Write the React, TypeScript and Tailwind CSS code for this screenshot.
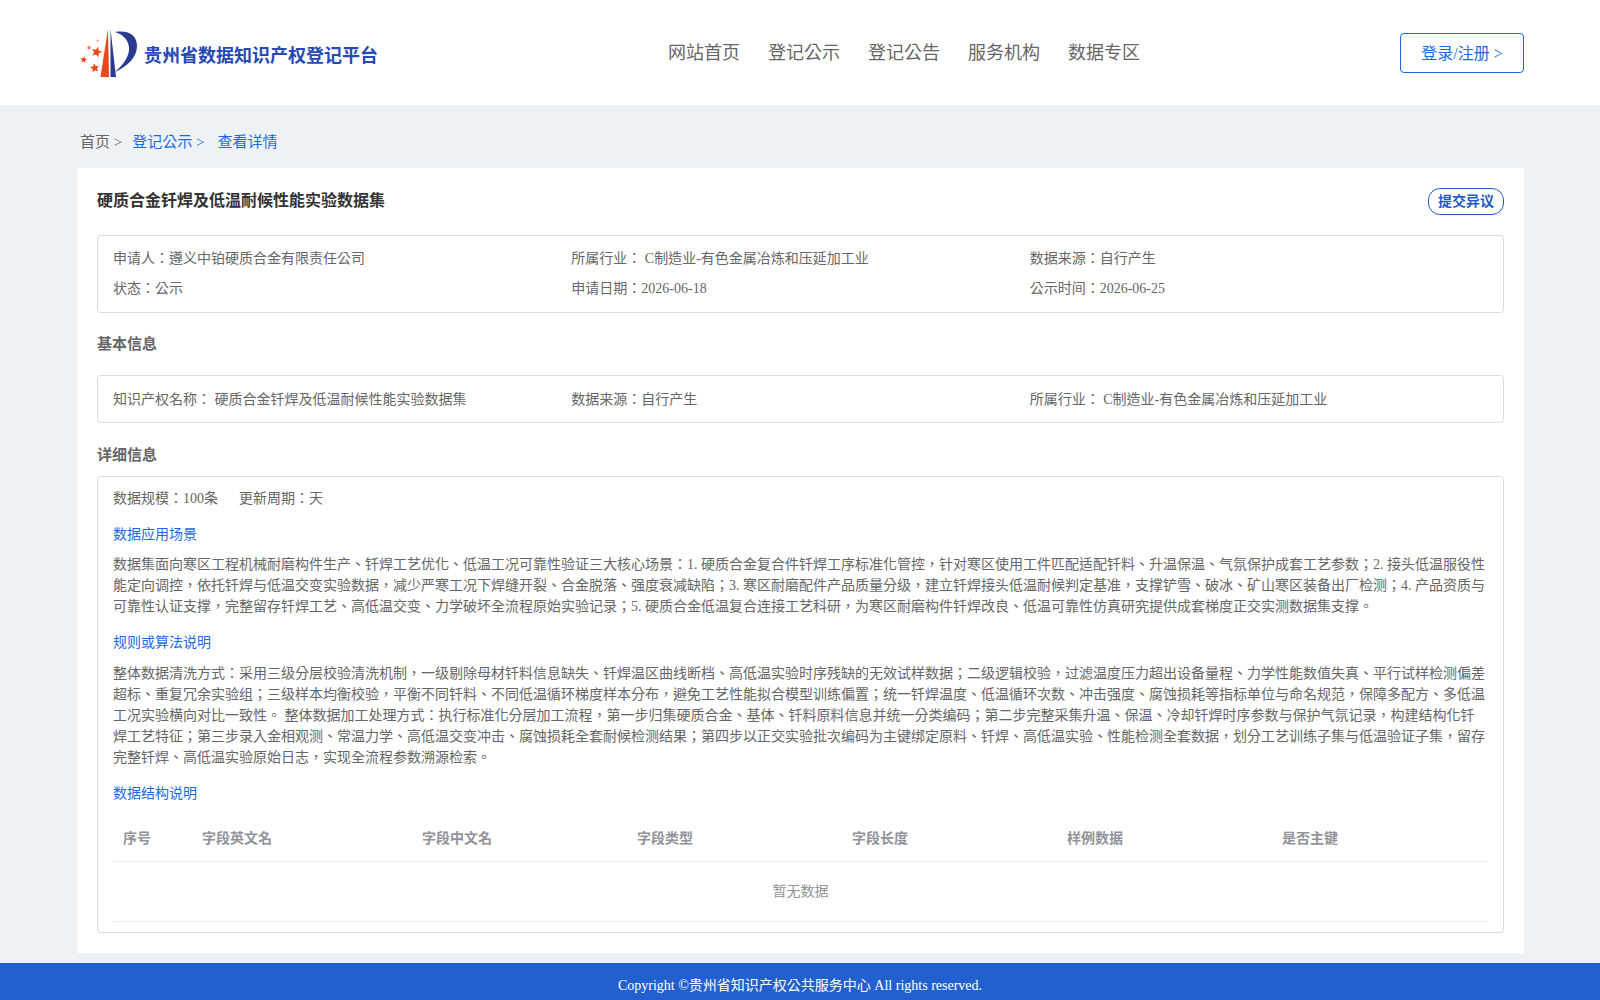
const info = [
  ["申请人：遵义中铂硬质合金有限责任公司", "所属行业： C制造业-有色金属冶炼和压延加工业", "数据来源：自行产生"],
  ["状态：公示", "申请日期：2026-06-18", "公示时间：2026-06-25"],
];
const basic = ["知识产权名称： 硬质合金钎焊及低温耐候性能实验数据集", "数据来源：自行产生", "所属行业： C制造业-有色金属冶炼和压延加工业"];
const nav = ["网站首页", "登记公示", "登记公告", "服务机构", "数据专区"];
const columns = [
  { name: "序号", width: "w-[79px]" },
  { name: "字段英文名", width: "w-[220px]" },
  { name: "字段中文名", width: "w-[215px]" },
  { name: "字段类型", width: "w-[215px]" },
  { name: "字段长度", width: "w-[215px]" },
  { name: "样例数据", width: "w-[215px]" },
  { name: "是否主键", width: "w-[216px]" },
];

function star(cx: number, cy: number, r: number, rot: number) {
  const pts: string[] = [];
  for (let i = 0; i < 10; i++) {
    const rad = i % 2 === 0 ? r : r * 0.45;
    const a = ((rot + i * 36 - 90) * Math.PI) / 180;
    pts.push(`${(cx + rad * Math.cos(a)).toFixed(2)},${(cy + rad * Math.sin(a)).toFixed(2)}`);
  }
  return pts.join(" ");
}

function Logo() {
  return (
    <svg width="58" height="52" viewBox="4 3 58 52" className="shrink-0">
      <path d="M32 5 L33 53 L24.500 53 Q28 30 32 5Z" fill="#e8481c" />
      <path d="M34.500 5 L40 53 L34.500 53Z" fill="#2a3a8f" />
      <path d="M39 8 C51 6 61 10 61 22 C61 34 50 43 39 48 C47 41 54 32 53 23 C52 15 46 10 39 8Z" fill="#2a3a8f" />
      <polygon points={star(20.700, 28, 5.5, 15)} fill="#e8481c" />
      <polygon points={star(18.700, 44, 4.8, -10)} fill="#e8481c" />
      <polygon points={star(7.700, 35.700, 3.5, 10)} fill="#e8481c" />
      <circle cx="13" cy="23.700" r="1.700" fill="#ee7a55" />
      <circle cx="21.700" cy="16.700" r="1.100" fill="#f09a80" />
    </svg>
  );
}

export default function App() {
  return (
    <div className="min-h-[1000px] flex flex-col bg-[#eff2f5] text-[14px] text-[#666] font-['Liberation_Serif','Noto_Sans_CJK_TC',serif]">
      <header className="h-[105px] bg-white px-[80px] flex items-center justify-between">
        <div className="flex items-center gap-[6px]">
          <Logo />
          <span className="mt-[8px] text-[18px] font-bold text-[#2649b5]">贵州省数据知识产权登记平台</span>
        </div>
        <nav className="flex gap-[28px] mt-[2px] ml-[30px] text-[18px]">
          {nav.map((n) => (
            <span key={n}>{n}</span>
          ))}
        </nav>
        <button className="w-[124px] h-[40px] mr-[-4px] pt-[2px] border border-[#1a6ae8] rounded-[4px] text-[16px] text-[#1a6ae8]">登录/注册 &gt;</button>
      </header>

      <div className="h-[63px] pl-[80px] pt-[12px] flex items-center text-[15px]">
        <span>首页 &gt;</span>
        <span className="ml-[10px] text-[#1a6ae8]">登记公示 &gt;</span>
        <span className="ml-[13px] text-[#1a6ae8]">查看详情</span>
      </div>

      <main className="ml-[77px] w-[1447px] h-[785px] bg-white px-[20px] pt-[20px]">
        <div className="h-[27px] flex items-center justify-between">
          <h1 className="pb-[2px] text-[16px] font-bold text-[#333]">硬质合金钎焊及低温耐候性能实验数据集</h1>
          <button className="h-[27px] w-[76px] border border-[#1f5bc4] rounded-[12px] text-[14px] font-bold text-[#1f5bc4]">提交异议</button>
        </div>

        <div className="mt-[20px] border border-[#dcdcdc] rounded-[4px] px-[15px] pt-[7px] pb-[9px]">
          {info.map((row, i) => (
            <div key={i} className="grid grid-cols-3 h-[30px] items-center">
              {row.map((c) => (
                <span key={c}>{c}</span>
              ))}
            </div>
          ))}
        </div>

        <h2 className="mt-[19px] h-[24px] leading-[24px] text-[15px] font-bold">基本信息</h2>
        <div className="mt-[19px] border border-[#dcdcdc] rounded-[4px] px-[15px] py-[8px]">
          <div className="grid grid-cols-3 h-[30px] items-center">
            {basic.map((c) => (
              <span key={c}>{c}</span>
            ))}
          </div>
        </div>

        <h2 className="mt-[20px] h-[24px] leading-[24px] text-[15px] font-bold">详细信息</h2>
        <div className="mt-[9px] h-[457px] border border-[#dcdcdc] rounded-[4px] px-[15px] pt-[8px]">
          <div className="h-[26px] flex items-center gap-[21px]">
            <span>数据规模：100条</span>
            <span>更新周期：天</span>
          </div>
          <h3 className="mt-[13px] h-[21px] leading-[21px] text-[#1a6ae8]">数据应用场景</h3>
          <p className="mt-[9px] leading-[21px]">
            数据集面向寒区工程机械耐磨构件生产、钎焊工艺优化、低温工况可靠性验证三大核心场景：1. 硬质合金复合件钎焊工序标准化管控，针对寒区使用工件匹配适配钎料、升温保温、气氛保护成套工艺参数；2. 接头低温服役性能定向调控，依托钎焊与低温交变实验数据，减少严寒工况下焊缝开裂、合金脱落、强度衰减缺陷；3. 寒区耐磨配件产品质量分级，建立钎焊接头低温耐候判定基准，支撑铲雪、破冰、矿山寒区装备出厂检测；4. 产品资质与可靠性认证支撑，完整留存钎焊工艺、高低温交变、力学破坏全流程原始实验记录；5. 硬质合金低温复合连接工艺科研，为寒区耐磨构件钎焊改良、低温可靠性仿真研究提供成套梯度正交实测数据集支撑。
          </p>
          <h3 className="mt-[15px] h-[21px] leading-[21px] text-[#1a6ae8]">规则或算法说明</h3>
          <p className="mt-[10px] leading-[21px]">
            整体数据清洗方式：采用三级分层校验清洗机制，一级剔除母材钎料信息缺失、钎焊温区曲线断档、高低温实验时序残缺的无效试样数据；二级逻辑校验，过滤温度压力超出设备量程、力学性能数值失真、平行试样检测偏差超标、重复冗余实验组；三级样本均衡校验，平衡不同钎料、不同低温循环梯度样本分布，避免工艺性能拟合模型训练偏置；统一钎焊温度、低温循环次数、冲击强度、腐蚀损耗等指标单位与命名规范，保障多配方、多低温工况实验横向对比一致性。 整体数据加工处理方式：执行标准化分层加工流程，第一步归集硬质合金、基体、钎料原料信息并统一分类编码；第二步完整采集升温、保温、冷却钎焊时序参数与保护气氛记录，构建结构化钎焊工艺特征；第三步录入金相观测、常温力学、高低温交变冲击、腐蚀损耗全套耐候检测结果；第四步以正交实验批次编码为主键绑定原料、钎焊、高低温实验、性能检测全套数据，划分工艺训练子集与低温验证子集，留存完整钎焊、高低温实验原始日志，实现全流程参数溯源检索。
          </p>
          <h3 className="mt-[15px] h-[21px] leading-[21px] text-[#1a6ae8]">数据结构说明</h3>
          <table className="mt-[10px] w-full table-fixed border-collapse">
            <thead>
              <tr className="h-[47px] border-b border-[#ebeef5]">
                {columns.map((c) => (
                  <th key={c.name} className={`${c.width} px-[10px] pt-[2px] text-left font-bold text-[#909399]`}>{c.name}</th>
                ))}
              </tr>
            </thead>
            <tbody>
              <tr className="h-[60px] border-b border-[#ebeef5]">
                <td colSpan={7} className="text-center text-[#909399]">暂无数据</td>
              </tr>
            </tbody>
          </table>
        </div>
      </main>

      <footer className="mt-auto h-[37px] pt-[8px] bg-[#2260cf] flex items-center justify-center text-[14px] text-white">
        Copyright ©贵州省知识产权公共服务中心 All rights reserved.
      </footer>
    </div>
  );
}
